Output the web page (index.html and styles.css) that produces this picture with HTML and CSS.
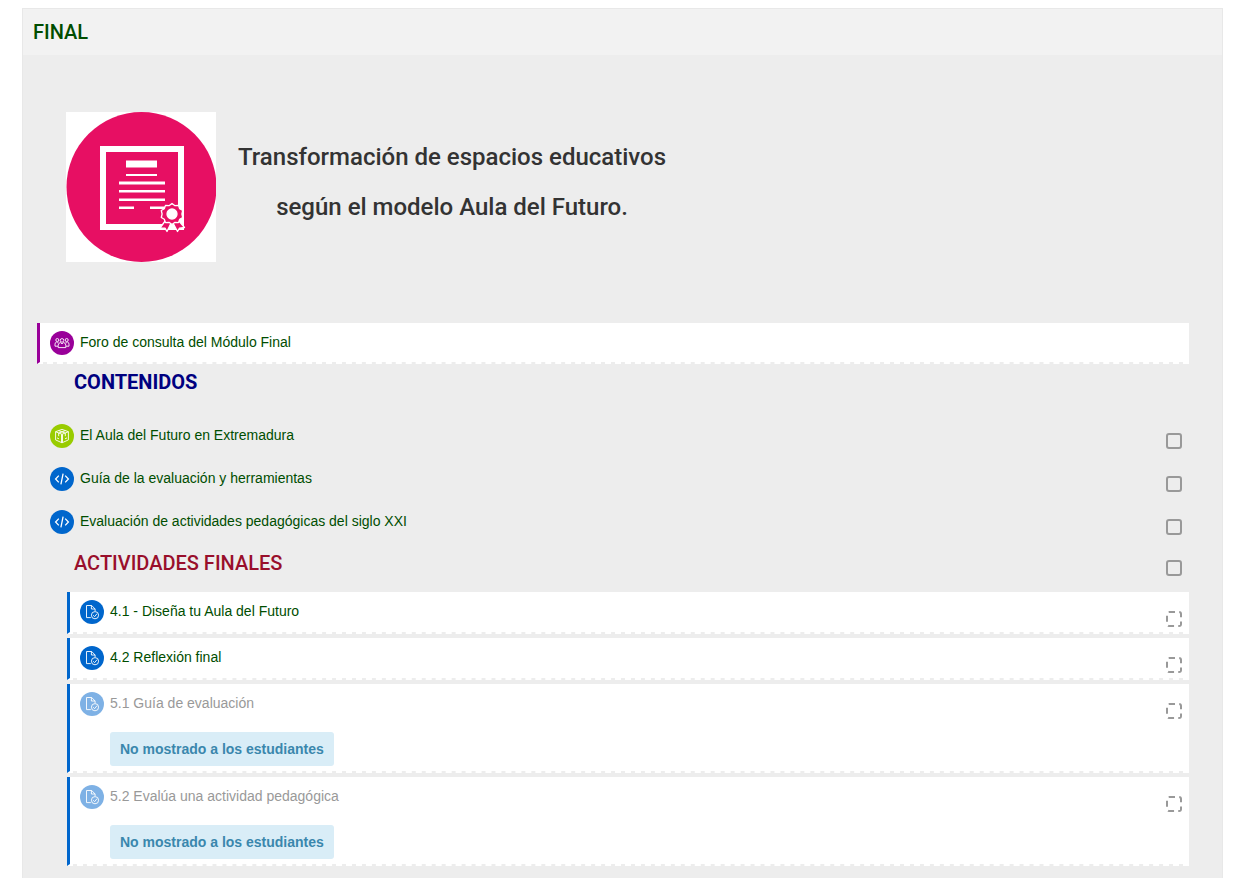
FILE: index.html
```
<!DOCTYPE html>
<html lang="es">
<head>
    <meta charset="UTF-8">
    <meta name="viewport" content="width=device-width, initial-scale=1.0">
    <title>Módulo Final</title>
    <link rel="stylesheet" href="styles.css">
</head>
<body>

    <!-- Shared icons -->
    <svg class="sprite" aria-hidden="true">
        <symbol id="icon-forum" viewBox="0 0 24 24">
            <g fill="none" stroke="#fff" stroke-width="0.9" stroke-linejoin="round">
                <circle cx="7.3" cy="9" r="1.5"/>
                <circle cx="16.7" cy="9" r="1.5"/>
                <circle cx="12" cy="9.4" r="1.8"/>
                <path d="M8.2 16.6v-2.4q0-2.2 2.2-2.6l1.6 1.2 1.6-1.2q2.2.4 2.2 2.6v2.4z"/>
                <path d="M8 15.2H5v-2q0-1.8 1.5-2.2l.9.7 1.2-.7M16 15.2h3v-2q0-1.8-1.5-2.2l-.9.7-1.2-.7"/>
            </g>
        </symbol>
        <symbol id="icon-package" viewBox="0 0 24 24">
            <g fill="none" stroke="#fff" stroke-width="0.9" stroke-linejoin="round">
                <path d="M12 5.4l6.4 2.3v8.2L12 18.8l-6.4-2.9V7.7z"/>
                <path d="M5.6 7.7L12 10.3l6.4-2.6M8.6 6.6l6.7 2.5v3.1M15.4 6.6L8.7 9.1v3.1M11.5 10.3v8.3M12.5 10.3v8.3M7 13.9l2 .9M17 13.9l-2 .9"/>
            </g>
        </symbol>
        <symbol id="icon-code" viewBox="0 0 24 24">
            <path d="M8.8 8.6L5.6 12l3.2 3.4M15.2 8.6l3.2 3.4-3.2 3.4M13.1 6.7l-2.2 10.6" fill="none" stroke="#fff" stroke-width="1.3"/>
        </symbol>
        <symbol id="icon-task" viewBox="0 0 24 24">
            <g fill="none" stroke="#fff" stroke-width="0.9">
                <path d="M10.8 17.6H6.5V5.5h5.2l3.4 3.5v2"/>
                <path d="M11.4 5.5V9h3.7"/>
                <circle cx="15" cy="15.2" r="3.6"/>
                <path d="M13.2 15.2l1.4 1.5 2.4-3"/>
            </g>
        </symbol>
    </svg>

    <section class="section">
        <header class="section-header">
            <h3><a href="#final">FINAL</a></h3>
        </header>

        <div class="content" id="final">
            <div class="summary">
                <svg class="summary-image" viewBox="0 0 150 150" role="img" aria-label="Diploma">
                    <rect width="150" height="150" fill="#fff"/>
                    <circle cx="75.5" cy="75" r="75" fill="#e70f63"/>
                    <rect x="37" y="37" width="78" height="78" fill="none" stroke="#fff" stroke-width="6"/>
                    <path d="M60 48.5h31v7H60zM60 62h31v2H60zM53 69.500h46v3H53zM53 78h46v2.500H53zM53 86.500h46V89H53zM53 94.500h15V97H53zM84 94.500h15V97H84z" fill="#fff"/>
                    <g fill="#e70f63" stroke="#fff" stroke-width="1.300" stroke-linejoin="round">
                        <path d="M99.500 108.500L94 116l5 .2 2 3.300 4.500-9.500M112.500 108.500L118.500 115.500l-5 .7-2 3.300-5-9.500"/>
                        <path d="M106 91.500l3 2.200 3.500-.3 1.200 3.300 3 1.800-.8 3.500.8 3.500-3 1.800-1.200 3.300-3.500-.3-3 2.200-3-2.200-3.500.3-1.200-3.300-3-1.800.8-3.500-.8-3.500 3-1.800 1.200-3.300 3.500.3z"/>
                        <circle cx="106" cy="102" r="5" fill="#fff"/>
                    </g>
                </svg>
                <h2>Transformación de espacios educativos<br>según el modelo Aula del Futuro.</h2>
            </div>

            <ul class="activities">
                <li class="activity forum">
                    <svg class="icon"><use href="#icon-forum"/></svg>
                    <a href="#foro">Foro de consulta del Módulo Final</a>
                </li>
            </ul>

            <h4 class="label contents">CONTENIDOS</h4>

            <ul class="activities">
                <li class="activity plain package">
                    <svg class="icon"><use href="#icon-package"/></svg>
                    <a href="#aula">El Aula del Futuro en Extremadura</a>
                    <input type="checkbox" aria-label="El Aula del Futuro en Extremadura">
                </li>
                <li class="activity plain">
                    <svg class="icon"><use href="#icon-code"/></svg>
                    <a href="#guia">Guía de la evaluación y herramientas</a>
                    <input type="checkbox" aria-label="Guía de la evaluación y herramientas">
                </li>
                <li class="activity plain">
                    <svg class="icon"><use href="#icon-code"/></svg>
                    <a href="#evaluacion">Evaluación de actividades pedagógicas del siglo XXI</a>
                    <input type="checkbox" aria-label="Evaluación de actividades pedagógicas del siglo XXI">
                </li>
            </ul>

            <div class="label finals">
                <h4>ACTIVIDADES FINALES</h4>
                <input type="checkbox" aria-label="Actividades finales">
            </div>

            <ul class="activities indent">
                <li class="activity">
                    <svg class="icon"><use href="#icon-task"/></svg>
                    <a href="#a41">4.1 - Diseña tu Aula del Futuro</a>
                    <input type="checkbox" class="auto" aria-label="4.1 - Diseña tu Aula del Futuro">
                </li>
                <li class="activity">
                    <svg class="icon"><use href="#icon-task"/></svg>
                    <a href="#a42">4.2 Reflexión final</a>
                    <input type="checkbox" class="auto" aria-label="4.2 Reflexión final">
                </li>
                <li class="activity dimmed">
                    <svg class="icon"><use href="#icon-task"/></svg>
                    <div class="info">
                        <a href="#a51">5.1 Guía de evaluación</a>
                        <span class="badge">No mostrado a los estudiantes</span>
                    </div>
                    <input type="checkbox" class="auto" aria-label="5.1 Guía de evaluación">
                </li>
                <li class="activity dimmed">
                    <svg class="icon"><use href="#icon-task"/></svg>
                    <div class="info">
                        <a href="#a52">5.2 Evalúa una actividad pedagógica</a>
                        <span class="badge">No mostrado a los estudiantes</span>
                    </div>
                    <input type="checkbox" class="auto" aria-label="5.2 Evalúa una actividad pedagógica">
                </li>
            </ul>
        </div>
    </section>

</body>
</html>
```
FILE: styles.css
```
* {
    box-sizing: border-box;
}
body {
    font-family: "Liberation Sans", Arial, sans-serif;
    font-size: 14px;
    line-height: 22px;
    margin: 0;
    padding: 8px 18px 0 22px;
    background-color: #fff;
    color: #333;
}
h2, h3, h4 {
    font-family: Roboto, sans-serif;
    font-weight: 500;
    margin: 0;
}
a {
    color: #004d00;
    text-decoration: none;
}
a:hover {
    text-decoration: underline;
}
.sprite {
    display: none;
}
.section {
    border: 1px solid #e8e8e8;
    border-bottom: none;
    background-color: #ededed;
}
.section-header {
    padding: 10px;
    background-color: #f2f2f2;
}
.section-header h3 {
    font-size: 20px;
    line-height: 26px;
}
.content {
    padding: 57px 33px 8px 14px;
}
.summary {
    display: flex;
    gap: 22px;
    padding-left: 29px;
    margin-bottom: 61px;
}
.summary-image {
    width: 150px;
    height: 150px;
}
.summary h2 {
    font-size: 24px;
    line-height: 50px;
    padding-top: 20px;
    text-align: center;
}

/* Activity list */
.activities {
    list-style: none;
    margin: 0;
    padding: 0;
}
.activities.indent {
    padding-left: 30px;
}
.activity {
    display: flex;
    align-items: flex-start;
    min-height: 41px;
    margin-bottom: 4px;
    padding: 8px 7px 5px 10px;
    background-color: #fff;
    background-clip: padding-box;
    border-left: 3px solid #0066cc;
    border-bottom: 2px dashed #fff;
}
.activity.forum {
    border-left-color: #990099;
}
.activity.plain {
    min-height: 39px;
    background: none;
    border-bottom: none;
    border-left-color: transparent;
}
.icon {
    flex: none;
    width: 24px;
    height: 24px;
    margin-right: 6px;
    border-radius: 50%;
    background-color: #0066cc;
}
.forum .icon {
    background-color: #990099;
}
.package .icon {
    background-color: #99cc00;
}
.dimmed .icon {
    opacity: 0.5;
}
.dimmed a {
    color: #999;
}
.info {
    display: flex;
    flex-direction: column;
    align-items: flex-start;
    gap: 18px;
}
.badge {
    padding: 6px 10px;
    border-radius: 3px;
    background-color: #d9edf7;
    color: #3a87ad;
    font-weight: bold;
}

/* Labels */
.label {
    font-size: 20px;
    line-height: 24px;
    padding-left: 37px;
}
.label h4 {
    font-size: 20px;
}
.label.contents {
    margin: 6px 0 22px;
    color: #000080;
    font-weight: 700;
}
.label.finals {
    display: flex;
    align-items: flex-start;
    padding: 6px 7px 16px 37px;
    color: #990f2b;
}

/* Completion boxes */
input[type="checkbox"] {
    appearance: none;
    flex: none;
    width: 16px;
    height: 16px;
    margin: 9px 0 0 auto;
    border: 2px solid #999;
    border-radius: 3px;
    cursor: pointer;
}
input[type="checkbox"].auto {
    margin-top: 11px;
    border-style: dashed;
}
input[type="checkbox"]:checked {
    background-color: #999;
}
```
